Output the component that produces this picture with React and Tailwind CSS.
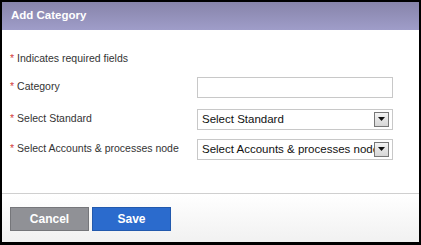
import React from 'react';

function Label({ children }) {
  return (
    <div className="flex items-center text-[10.5px] text-[#333]">
      <span className="text-[#d23b3b] mr-[3px]">*</span>
      {children}
    </div>
  );
}

function SelectBox({ value }) {
  return (
    <div className="flex items-center w-[196px] h-[21px] border border-[#c8c8c8] bg-white pl-[4px] pr-[3px]">
      <span className="flex-1 overflow-hidden whitespace-nowrap text-[11.5px] text-[#111]">{value}</span>
      <span className="flex items-center justify-center w-[15px] h-[15px] border border-[#777] bg-gradient-to-b from-[#f4f4f4] to-[#d6d6d6] shrink-0">
        <svg width="7" height="4" viewBox="0 0 7 4">
          <path d="M0 0h7L3.5 4z" fill="#111" />
        </svg>
      </span>
    </div>
  );
}

export default function App() {
  return (
    <div className="w-[421px] h-[245px] bg-black pt-[2px] px-[2px] pb-[3px] font-['Liberation_Sans',Arial,sans-serif]">
      <div className="flex flex-col h-full bg-white">
        {/* Header */}
        <div className="h-[28px] flex items-center px-[9px] bg-gradient-to-b from-[#8784aa] to-[#9f9dc9]">
          <span className="text-white font-bold text-[11.5px]">Add Category</span>
        </div>

        {/* Body */}
        <div className="flex flex-col px-[8px] pt-[21px]">
          <Label>Indicates required fields</Label>
          <div className="flex items-center justify-between mt-[10px] pr-[18px]">
            <Label>Category</Label>
            <div className="w-[196px] h-[21px] border border-[#c8c8c8] bg-white" />
          </div>
          <div className="flex items-center justify-between mt-[11px] pr-[18px]">
            <Label>Select Standard</Label>
            <SelectBox value="Select Standard" />
          </div>
          <div className="flex items-center justify-between mt-[9px] pr-[18px]">
            <Label>Select Accounts &amp; processes node</Label>
            <SelectBox value="Select Accounts & processes node" />
          </div>
        </div>

        {/* Footer */}
        <div className="mt-auto h-[49px] border-t border-[#cfcfcf] bg-gradient-to-b from-white to-[#f1f1f1] flex items-start gap-[3px] px-[8px] pt-[13px]">
          <button className="w-[79px] h-[24px] bg-[#909196] border border-[#75767a] text-white font-bold text-[12px]">
            Cancel
          </button>
          <button className="w-[79px] h-[24px] bg-[#2b6bcd] border border-[#2259ad] text-white font-bold text-[12px]">
            Save
          </button>
        </div>
      </div>
    </div>
  );
}
